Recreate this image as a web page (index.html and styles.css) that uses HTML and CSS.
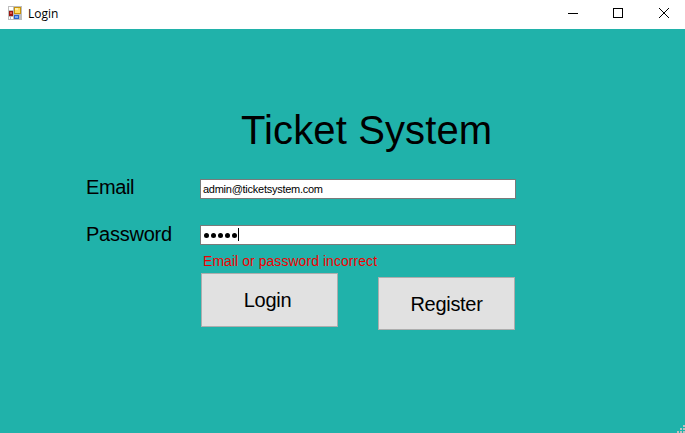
FILE: index.html
```html
<!DOCTYPE html>
<html lang="en">
<head>
<meta charset="utf-8">
<title>Login</title>
<link rel="stylesheet" href="styles.css">
</head>
<body>
<div class="window">
  <header class="titlebar">
    <svg class="app-icon" width="14" height="14" viewBox="0 0 14 14" shape-rendering="crispEdges">
      <path fill="#bdbdbd" d="M0 0h14v14H0z"/>
      <path fill="#fff" d="M1 1h4v3H1zM1 11h1v2H1zM3 11h2v2H3z"/>
      <path fill="#9b1610" d="M1 5h4v5H1z"/><path fill="#e0584a" d="M2 6h2v2H2z"/>
      <path fill="#c8920c" d="M6 1h7v7H6z"/><path fill="#ffdc63" d="M7 2h5v5H7z"/><path fill="#fff0a8" d="M7 2h3v2H7z"/>
      <path fill="#2863c8" d="M6 9h5v4H6z"/><path fill="#78aaf5" d="M7 10h3v2H7z"/>
    </svg>
    <span class="caption">Login</span>
    <svg class="controls" width="102" height="12" viewBox="0 0 102 12" fill="none" stroke="#000">
      <path d="M0 5.5h10M45.5 .5h9v9h-9z" shape-rendering="crispEdges"/>
      <path d="M91 0l10 10M101 0L91 10"/>
    </svg>
  </header>
  <main class="client">
    <h1 class="title">Ticket System</h1>
    <form class="form">
      <label class="label label-email">Email</label>
      <div class="field">admin@ticketsystem.com</div>
      <label class="label label-password">Password</label>
      <div class="field password">
        <svg width="38" height="16" viewBox="0 0 38 16"><g fill="#000"><circle cx="3.5" cy="8.5" r="2.5"/><circle cx="10.5" cy="8.5" r="2.5"/><circle cx="17.5" cy="8.5" r="2.5"/><circle cx="24.5" cy="8.5" r="2.5"/><circle cx="31.5" cy="8.5" r="2.5"/></g><path fill="#000" d="M35 1h1v13h-1z"/></svg>
      </div>
    </form>
    <p class="error">Email or password incorrect</p>
    <div class="actions">
      <button class="button login"><span>Login</span></button>
      <button class="button register"><span>Register</span></button>
    </div>
    <svg class="grip" width="8" height="8" viewBox="0 0 8 8" fill="#c0c0c0" shape-rendering="crispEdges"><path d="M6 0h2v2H6zM3 3h2v2H3zM6 3h2v2H6zM0 6h2v2H0zM3 6h2v2H3zM6 6h2v2H6z"/></svg>
  </main>
</div>
</body>
</html>
```
FILE: styles.css
```css
* { box-sizing: border-box; }
body { margin: 0; font-family: "Liberation Sans", Arial, sans-serif; color: #000; }
.window { width: 685px; height: 433px; display: flex; flex-direction: column; overflow: hidden; }
.titlebar { height: 29px; background: #fff; display: flex; align-items: flex-start; padding: 6px 15px 0 8px; }
.caption { font: 12px/16px "Open Sans", "Noto Sans", sans-serif; margin-left: 6px; }
.controls { margin: 2px 0 0 auto; }
.client { position: relative; flex: 1; background: #20b2aa; padding: 78px 0 0 86px; }
.title { margin: 0 0 0 155px; font-size: 40px; font-weight: 400; line-height: 46px; letter-spacing: 0.12px; white-space: nowrap; }
.form { display: grid; grid-template-columns: 114px 316px; grid-template-rows: 20px 20px; row-gap: 26px; margin-top: 26px; }
.label { font-size: 20px; line-height: 17px; white-space: nowrap; }
.label-email { letter-spacing: -0.4px; }
.label-password { letter-spacing: -0.25px; line-height: 19px; }
.field { background: #fff; border: 1px solid #7a7a7a; font-size: 11px; line-height: 18px; letter-spacing: -0.26px; padding-left: 2px; }
.password { display: flex; align-items: center; }
.error { margin: 8px 0 0 117px; color: #f00000; font-size: 14px; line-height: 16px; letter-spacing: 0.05px; white-space: nowrap; }
.actions { display: flex; gap: 40px; margin: 4px 0 0 115px; }
.button { font-family: inherit; font-size: 20px; color: #000; background: #e1e1e1; border: 1px solid #adadad; border-radius: 0; width: 137px; padding: 0; }
.login { height: 54px; letter-spacing: -0.3px; padding-right: 4px; }
.register { height: 53px; margin-top: 4px; letter-spacing: -0.3px; padding-top: 2px; }
.grip { position: absolute; right: 0; bottom: 0; }
```
